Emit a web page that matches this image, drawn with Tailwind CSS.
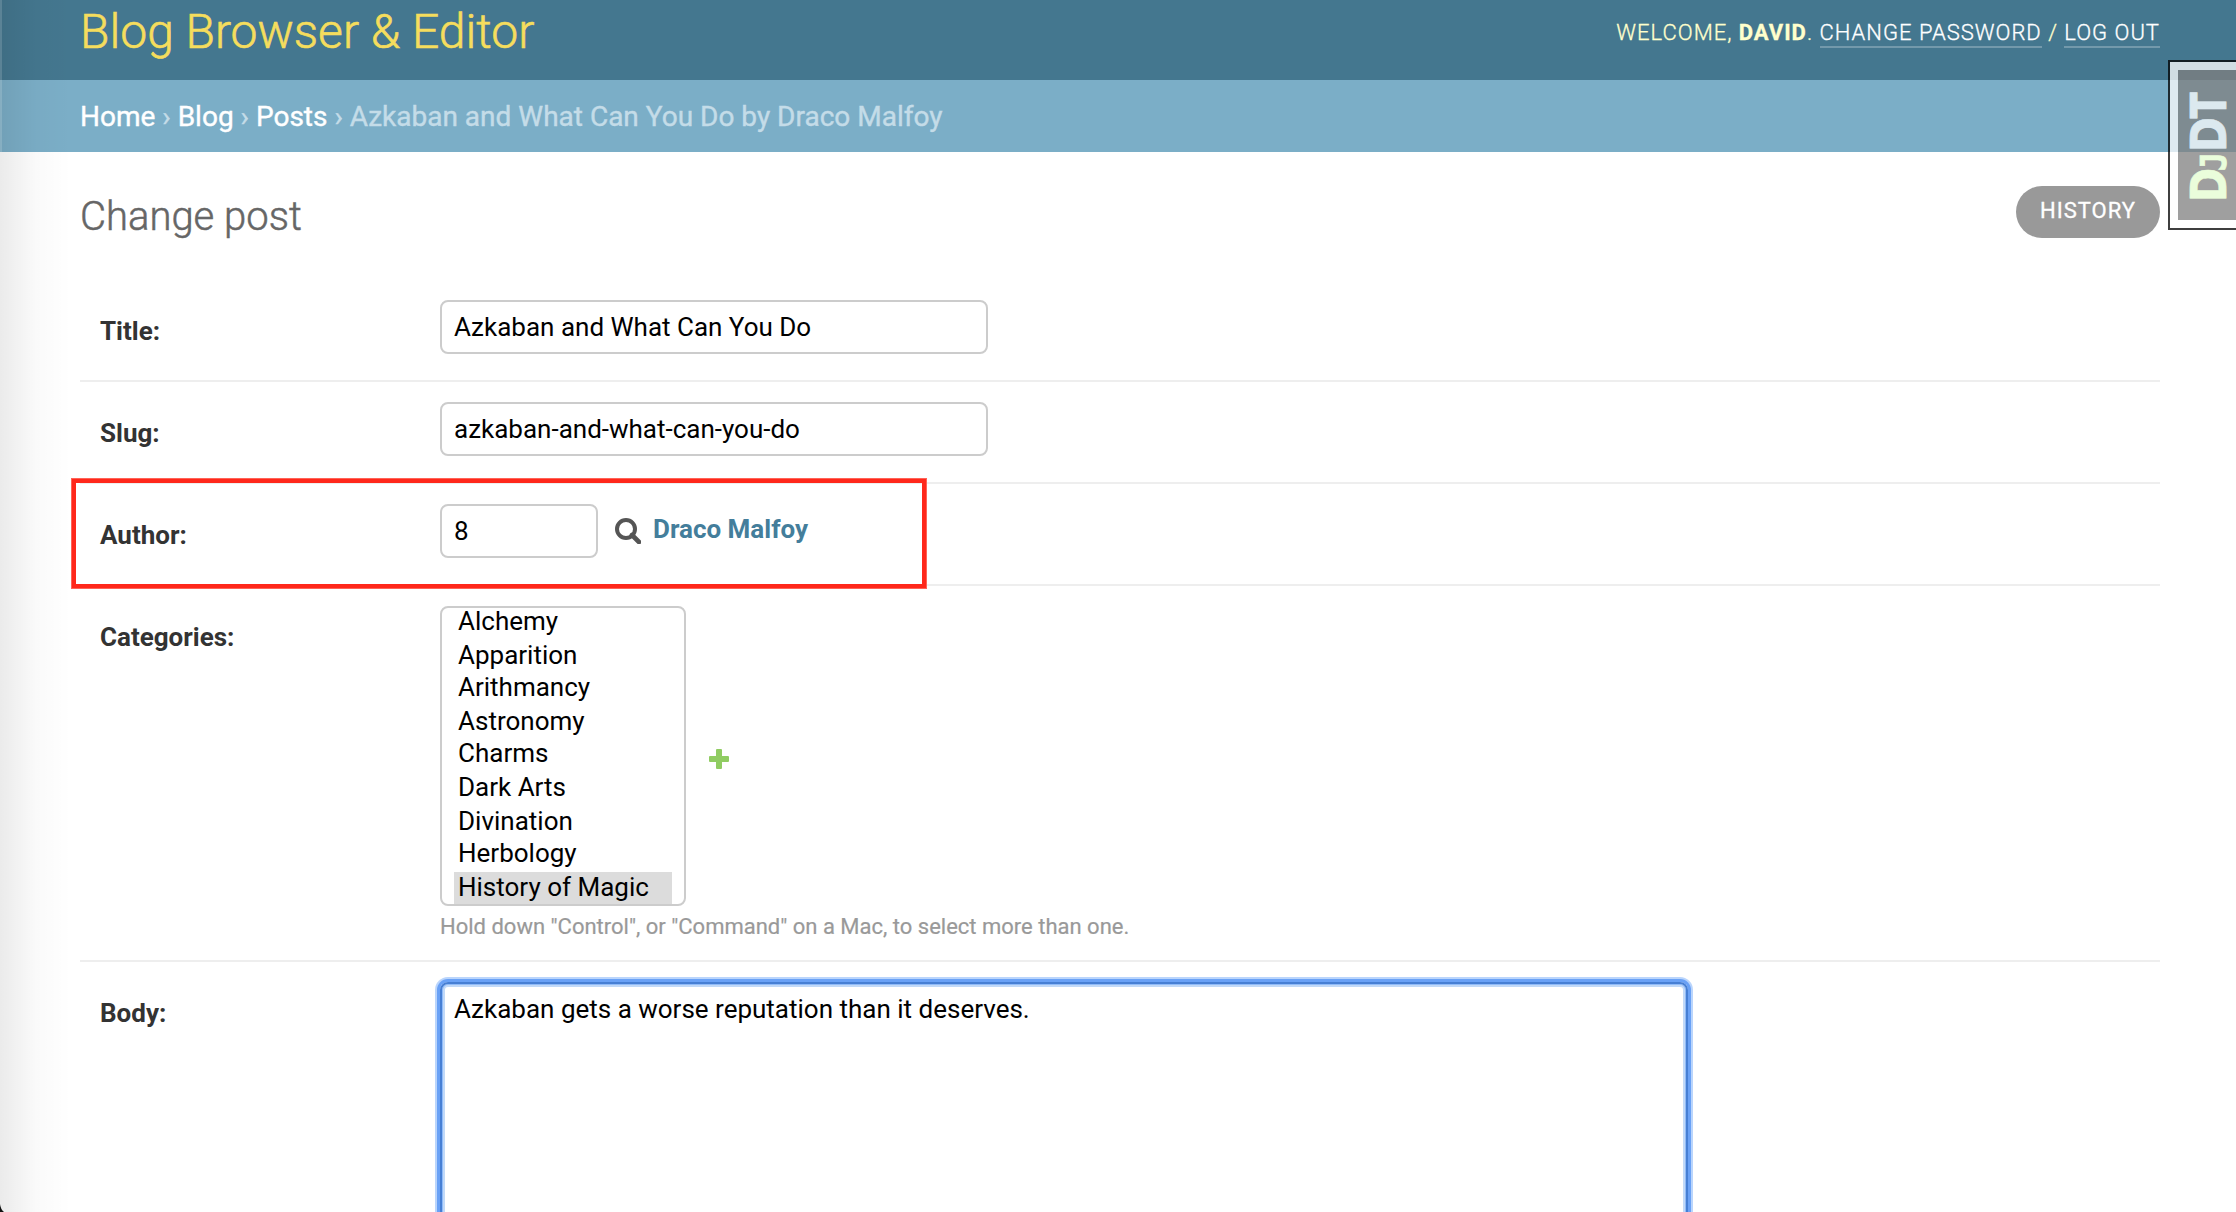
<!DOCTYPE html>
<html lang="en">
<head>
<meta charset="utf-8">
<title>Change post | Blog Browser &amp; Editor</title>
<script src="https://cdn.jsdelivr.net/npm/@tailwindcss/browser@4"></script>
</head>
<body class="relative h-[1212px] w-[2236px] overflow-hidden bg-white font-['Roboto',sans-serif] text-[26px] text-[#333]">
  <header class="flex h-20 items-start justify-between bg-[#44778f] pr-[76px] pl-20">
    <h1 class="mt-1 text-[48px] leading-[56px] font-light text-[#f5dd5d] [-webkit-text-stroke:0.6px]">Blog Browser &amp; Editor</h1>
    <div class="mt-5 text-[22px] leading-[26px] font-light tracking-[1px] text-[#ffffcc] [-webkit-text-stroke:0.3px]">WELCOME, <strong class="font-bold">DAVID</strong>. <a class="inline-block h-[28px] border-b-2 border-white/25 text-white">CHANGE PASSWORD</a> / <a class="inline-block h-[28px] border-b-2 border-white/25 text-white">LOG OUT</a></div>
  </header>
  <nav class="h-[72px] bg-[#7baec7] pt-[21px] pl-20 text-[28px] leading-8 text-[#c4dce8] [-webkit-text-stroke:0.4px]"><a class="text-white">Home</a> › <a class="text-white">Blog</a> › <a class="text-white">Posts</a> › Azkaban and What Can You Do by Draco Malfoy</nav>

  <main class="pr-[76px] pl-20">
    <div class="flex h-32 items-start justify-between">
      <h2 class="mt-[41px] text-[40px] leading-[48px] font-light text-[#666] [-webkit-text-stroke:0.5px]">Change post</h2>
      <a class="mt-[34px] flex h-[52px] w-36 justify-center rounded-full bg-[#999] pt-3 text-[22px] leading-[26px] tracking-[1px] text-white [-webkit-text-stroke:0.3px]">HISTORY</a>
    </div>
    <div class="flex h-[102px] border-b-2 border-[#eee] pt-5 pl-5">
      <label class="w-[340px] pt-4 leading-[30px] font-bold">Title:</label>
      <div class="h-[54px] w-[548px] rounded-lg border-2 border-[#ccc] px-3 pt-[10px] leading-[30px] text-black">Azkaban and What Can You Do</div>
    </div>
    <div class="flex h-[102px] border-b-2 border-[#eee] pt-5 pl-5">
      <label class="w-[340px] pt-4 leading-[30px] font-bold">Slug:</label>
      <div class="h-[54px] w-[548px] rounded-lg border-2 border-[#ccc] px-3 pt-[10px] leading-[30px] text-black">azkaban-and-what-can-you-do</div>
    </div>
    <div class="flex h-[102px] border-b-2 border-[#eee] pt-5 pl-5">
      <label class="w-[340px] pt-4 leading-[30px] font-bold">Author:</label>
      <div class="h-[54px] w-[158px] rounded-lg border-2 border-[#ccc] px-3 pt-[10px] leading-[30px] text-black">8</div>
      <svg class="mt-[14px] ml-[17px] h-[26px] w-[26px]" viewBox="0 0 26 26" fill="none" stroke="#555"><circle cx="11" cy="11" r="9" stroke-width="4"/><path d="M17 17l7 7" stroke-width="4.6" stroke-linecap="round"/></svg>
      <a class="ml-3 pt-[10px] leading-[30px] font-bold text-[#447e9b]">Draco Malfoy</a>
    </div>
    <div class="flex h-[376px] border-b-2 border-[#eee] pt-5 pl-5">
      <label class="w-[340px] pt-4 leading-[30px] font-bold">Categories:</label>
      <div>
        <div class="flex">
          <div class="h-[300px] w-[246px] overflow-hidden rounded-lg border-2 border-[#ccc] px-3 leading-[30px] text-black">
            <div class="-mt-0.5 h-[33px] pl-1">Alchemy</div>
            <div class="h-[33px] pt-px pl-1">Apparition</div>
            <div class="h-[33px] pl-1">Arithmancy</div>
            <div class="h-[33px] pt-px pl-1">Astronomy</div>
            <div class="h-[33px] pl-1">Charms</div>
            <div class="h-[34px] pt-px pl-1">Dark Arts</div>
            <div class="h-[33px] pt-px pl-1">Divination</div>
            <div class="h-[34px] pl-1">Herbology</div>
            <div class="h-[33px] w-[218px] bg-[#dcdcdc] pl-1">History of Magic</div>
          </div>
          <svg class="mt-[143px] ml-[23px] h-5 w-5" viewBox="0 0 20 20" fill="#90cc62"><rect x="0" y="7" width="20" height="6" rx="1"/><rect x="7" y="0" width="6" height="20" rx="1"/></svg>
        </div>
        <p class="mt-2 text-[22px] leading-[26px] text-[#999] [-webkit-text-stroke:0.2px]">Hold down "Control", or "Command" on a Mac, to select more than one.</p>
      </div>
    </div>
    <div class="flex h-[250px] pt-5 pl-5">
      <label class="w-[340px] pt-4 leading-[30px] font-bold">Body:</label>
      <div class="h-[240px] w-[1248px] rounded-lg border-2 border-[#467fd4] px-3 pt-[10px] leading-[30px] text-black shadow-[0_0_0_3px_#69a1f6,0_0_0_5px_#bad5fc,inset_0_0_0_1px_#90bbf8,inset_0_0_0_3px_#c1d9f8]">Azkaban gets a worse reputation than it deserves.</div>
    </div>
  </main>

  <!-- highlight around the author row -->
  <div class="absolute top-[478px] left-[71px] h-[111px] w-[856px] border-[5px] border-[#ff281b] outline-1 -outline-offset-1 outline-[#ff8b80]/60"></div>

  <!-- debug toolbar handle -->
  <div class="absolute top-[60px] left-[2168px] h-[170px] w-[80px] border-2 border-black bg-white p-2 opacity-75">
    <div class="h-[150px] w-full bg-[#808080]">
      <svg class="h-[150px] w-[58px]" viewBox="0 0 58 150" font-family="DejaVu Sans" font-weight="700">
        <g transform="translate(48 128) rotate(-90)">
          <g fill="#e4fdd0" stroke="#e4fdd0" stroke-width=".7"><text transform="translate(-4 0) scale(.84 1)" font-size="49">D</text><text transform="translate(27 0) scale(.9 1)" font-size="35" font-family="DejaVu Sans Mono">J</text></g>
          <g fill="#fdfdfd" stroke="#fdfdfd" stroke-width=".7"><text transform="translate(46 0) scale(.86 1)" font-size="49">D</text><text transform="translate(79.5 0) scale(.78 1)" font-size="49">T</text></g>
        </g>
      </svg>
    </div>
  </div>

  <!-- soft window edge on the left -->
  <div class="pointer-events-none absolute inset-y-0 left-0 w-[72px] bg-linear-to-r from-black/8 via-black/2 to-transparent"></div>
  <div class="absolute top-0 left-0 h-[152px] w-[2px] bg-white/15"></div>
  <svg class="absolute bottom-0 left-0 h-2 w-1" viewBox="0 0 4 8"><path d="M0 0Q.5 5 4 8H0z" fill="#111"/></svg>
</body>
</html>
